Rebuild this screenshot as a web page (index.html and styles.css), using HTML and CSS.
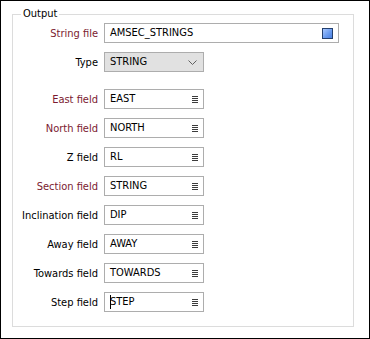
FILE: index.html
```html
<!DOCTYPE html>
<html lang="en">

<head>
    <meta charset="UTF-8">
    <title>Output</title>
    <link rel="stylesheet" href="styles.css">
</head>

<body>
    <fieldset class="group">
        <legend>Output</legend>

        <div class="row">
            <label class="req">String file</label>
            <div class="box wide">
                <span>AMSEC_STRINGS</span>
                <span class="file-btn"></span>
            </div>
        </div>

        <div class="row">
            <label>Type</label>
            <div class="box combo">
                <span>STRING</span>
                <svg class="chev" width="9" height="5" viewBox="0 0 9 5">
                    <path d="M0.5 0.5 L4.5 4.5 L8.5 0.5" fill="none" stroke="#606060" stroke-width="1"/>
                </svg>
            </div>
        </div>

        <div class="row first-field">
            <label class="req">East field</label>
            <div class="box"><span>EAST</span><i class="menu"></i></div>
        </div>
        <div class="row">
            <label class="req">North field</label>
            <div class="box"><span>NORTH</span><i class="menu"></i></div>
        </div>
        <div class="row">
            <label>Z field</label>
            <div class="box"><span>RL</span><i class="menu"></i></div>
        </div>
        <div class="row">
            <label class="req">Section field</label>
            <div class="box"><span>STRING</span><i class="menu"></i></div>
        </div>
        <div class="row">
            <label>Inclination field</label>
            <div class="box"><span>DIP</span><i class="menu"></i></div>
        </div>
        <div class="row">
            <label>Away field</label>
            <div class="box"><span>AWAY</span><i class="menu"></i></div>
        </div>
        <div class="row">
            <label>Towards field</label>
            <div class="box"><span>TOWARDS</span><i class="menu"></i></div>
        </div>
        <div class="row last">
            <label>Step field</label>
            <div class="box"><span>STEP</span><i class="menu"></i><b class="ibeam"></b></div>
        </div>
    </fieldset>
</body>

</html>
```

FILE: styles.css
```css
html {
    background: #ffffff;
}

body {
    margin: 0;
    width: 370px;
    height: 339px;
    box-sizing: border-box;
    border: 1px solid #000000;
    font-family: "DejaVu Sans Condensed", "DejaVu Sans", sans-serif;
    font-stretch: condensed;
    font-size: 11px;
    color: #000000;
    overflow: hidden;
}

.group {
    margin: 6px 0 0 11px;
    width: 342px;
    height: 320px;
    box-sizing: border-box;
    border: 1px solid #dcdcdc;
    padding: 2px 8px 0 8px;
}

.group legend {
    padding: 0 2px;
    line-height: 14px;
}

.row {
    display: flex;
    align-items: center;
    height: 20px;
    margin-bottom: 9px;
}

.row.first-field {
    margin-top: 17px;
}

.row label {
    width: 77px;
    margin-right: 6px;
    text-align: right;
    white-space: nowrap;
}

.req {
    color: #7b1a30;
}

.box {
    position: relative;
    display: flex;
    align-items: center;
    justify-content: space-between;
    width: 100px;
    height: 20px;
    box-sizing: border-box;
    border: 1px solid #adadad;
    padding: 0 5px 0 5px;
    background: #ffffff;
    line-height: 18px;
}

.box.wide {
    width: 235px;
}

.box.combo {
    background: #e1e1e1;
    padding-right: 6px;
}

.file-btn {
    width: 9px;
    height: 9px;
    border: 1px solid #24406e;
    background: linear-gradient(135deg, #a9c8ff 0%, #6b9cf0 55%, #4a7fe0 100%);
}

.menu {
    width: 6px;
    height: 7px;
    margin-top: 1px;
    background: repeating-linear-gradient(to bottom, #3c3c3c 0, #3c3c3c 1px, transparent 1px, transparent 2px);
}

.ibeam {
    position: absolute;
    left: 5px;
    top: 2px;
    width: 1px;
    height: 14px;
    background: #000000;
}
```
